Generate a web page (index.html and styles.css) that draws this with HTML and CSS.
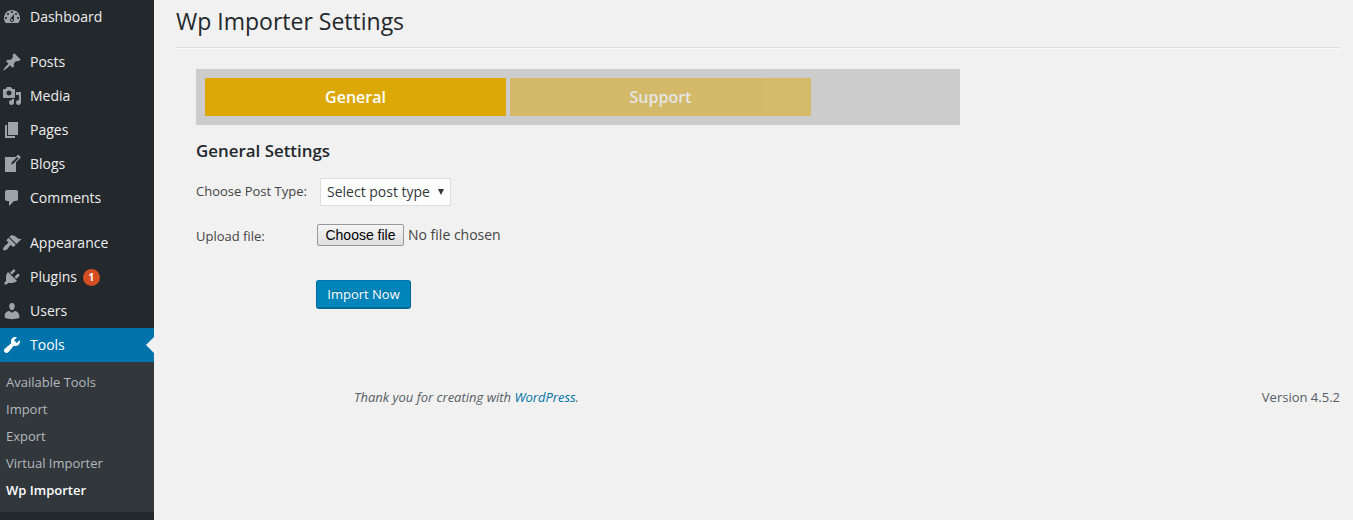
FILE: index.html
```html
<!DOCTYPE html>
<html lang="en">
<head>
<meta charset="utf-8">
<title>Wp Importer Settings</title>
<link rel="stylesheet" href="styles.css">
</head>
<body>
<div class="layout">
  <nav class="sidebar">
    <ul class="menu">
      <li class="item"><svg class="icon" viewBox="0 0 20 20"><path d="M3.76 16h12.48c1.1-1.37 1.76-3.11 1.76-5 0-4.42-3.58-8-8-8s-8 3.58-8 8c0 1.89.66 3.63 1.76 5zM10 4c.55 0 1 .45 1 1s-.45 1-1 1-1-.45-1-1 .45-1 1-1zM6 6c.55 0 1 .45 1 1s-.45 1-1 1-1-.45-1-1 .45-1 1-1zm8 0c.55 0 1 .45 1 1s-.45 1-1 1-1-.45-1-1 .45-1 1-1zm-5.370 5.550L12 7v6c0 1.100-.9 2-2 2s-2-.9-2-2c0-.57.24-1.080.63-1.450zM4 10c.55 0 1 .45 1 1s-.45 1-1 1-1-.45-1-1 .45-1 1-1zm12 0c.55 0 1 .45 1 1s-.45 1-1 1-1-.45-1-1 .45-1 1-1zm-5 3c0-.55-.45-1-1-1s-1 .45-1 1 .45 1 1 1 1-.45 1-1z" fill-rule="evenodd"/></svg><span>Dashboard</span></li>
      <li class="item group-start"><svg class="icon" viewBox="0 0 20 20"><path d="M10.44 3.02l1.82-1.82 6.36 6.35-1.83 1.82c-1.05-.68-2.48-.57-3.41.36l-.75.75c-.92.93-1.04 2.35-.35 3.41l-1.83 1.82-2.41-2.41-2.8 2.79c-.42.42-3.38 2.71-3.8 2.29s1.86-3.39 2.28-3.81l2.79-2.79L4.1 9.36l1.83-1.82c1.05.69 2.48.57 3.4-.36l.75-.75c.93-.92 1.05-2.35.36-3.41z"/></svg><span>Posts</span></li>
      <li class="item"><svg class="icon" viewBox="0 0 20 20"><path fill-rule="evenodd" d="M13 11V4c0-.55-.45-1-1-1h-1.67L9 1H5L3.67 3H2c-.55 0-1 .45-1 1v7c0 .55.45 1 1 1h10c.55 0 1-.45 1-1zM7 4.500c1.380 0 2.500 1.120 2.500 2.500S8.380 9.500 7 9.500 4.500 8.380 4.500 7 5.620 4.500 7 4.500zM14 6h5v10.500c0 1.380-1.120 2.500-2.500 2.500S14 17.880 14 16.500s1.120-2.500 2.500-2.500c.17 0 .34.02.5.05V9h-3V6zm-4 8.050V13h2v3.500c0 1.380-1.120 2.500-2.500 2.500S7 17.880 7 16.500 8.120 14 9.500 14c.17 0 .34.02.5.05z"/></svg><span>Media</span></li>
      <li class="item"><svg class="icon" viewBox="0 0 20 20"><path d="M6 15V2h10v13H6zm-1 1h8v2H3V5h2v11z"/></svg><span>Pages</span></li>
      <li class="item"><svg class="icon" viewBox="0 0 20 20"><path fill-rule="evenodd" d="M16.89 1.200l1.410 1.410c.39.39.39 1.020 0 1.410L14 8.330V18H3V3h10.670l1.800-1.800c.4-.39 1.030-.4 1.420 0zm-5.660 8.480l5.370-5.360-1.420-1.420-5.360 5.370-.71 2.120z"/></svg><span>Blogs</span></li>
      <li class="item"><svg class="icon" viewBox="0 0 20 20"><path d="M5 2h9c1.100 0 2 .9 2 2v7c0 1.100-.9 2-2 2h-2l-5 5v-5H5c-1.100 0-2-.9-2-2V4c0-1.100.9-2 2-2z"/></svg><span>Comments</span></li>
      <li class="item group-start"><svg class="icon" viewBox="0 0 20 20"><path d="M14.48 11.06L7.41 3.99l1.5-1.5c.5-.56 2.3-.47 3.51.32 1.21.8 1.43 1.28 2.91 2.1 1.18.64 2.45 1.26 4.45.85zm-.71.71L6.7 4.7 4.93 6.47c-.39.39-.39 1.02 0 1.41l1.06 1.06c.39.39.39 1.03 0 1.42-.6.6-1.43 1.11-2.21 1.69-.35.26-.7.53-1.01.84C1.43 14.23.4 16.08 1.4 17.07c.99 1 2.84-.03 4.18-1.36.31-.31.58-.66.85-1.02.57-.78 1.08-1.61 1.69-2.21.39-.39 1.02-.39 1.41 0l1.06 1.06c.39.39 1.02.39 1.41 0z"/></svg><span>Appearance</span></li>
      <li class="item"><svg class="icon" viewBox="0 0 20 20"><path d="M13.11 4.36L9.87 7.6 8 5.73l3.24-3.24c.35-.34 1.05-.2 1.56.32.52.51.66 1.21.31 1.55zm-8 1.77l.91-1.12 9.01 9.01-1.19.84c-.71.71-2.63 1.16-3.82 1.16H6.14L4.9 17.26c-.59.59-1.54.59-2.12 0-.59-.58-.59-1.53 0-2.12l1.24-1.24v-3.88c0-1.13.4-3.19 1.09-3.89zm7.26 3.97l3.24-3.24c.34-.35 1.04-.21 1.55.31.52.51.66 1.21.31 1.55l-3.24 3.25z"/></svg><span>Plugins</span><span class="count">1</span></li>
      <li class="item"><svg class="icon" viewBox="0 0 20 20"><path d="M10 9.25c-2.27 0-2.73-3.44-2.73-3.44C7 4.02 7.82 2 9.97 2c2.16 0 2.98 2.02 2.71 3.81 0 0-.41 3.44-2.68 3.44zm0 2.57L12.72 10c2.39 0 4.52 2.33 4.52 4.53v2.49s-3.65 1.13-7.24 1.13c-3.65 0-7.24-1.13-7.24-1.13v-2.49c0-2.25 1.94-4.48 4.47-4.48z"/></svg><span>Users</span></li>
      <li class="item current"><svg class="icon" viewBox="0 0 20 20"><path d="M16.68 9.77c-1.34 1.34-3.3 1.67-4.95.99l-5.41 6.52c-.99.99-2.59.99-3.58 0s-.99-2.59 0-3.57l6.52-5.42c-.68-1.65-.35-3.61.99-4.95 1.28-1.28 3.12-1.62 4.72-1.06l-2.89 2.89 2.82 2.82 2.86-2.87c.53 1.58.18 3.39-1.08 4.65z"/></svg><span>Tools</span></li>
    </ul>
    <ul class="submenu">
      <li>Available Tools</li>
      <li>Import</li>
      <li>Export</li>
      <li>Virtual Importer</li>
      <li class="active">Wp Importer</li>
    </ul>
  </nav>
  <main class="content">
    <h1 class="title">Wp Importer Settings</h1>
    <section class="panel">
      <div class="tabs">
        <div class="tab">General</div>
        <div class="tab inactive">Support</div>
      </div>
      <h2 class="heading">General Settings</h2>
      <div class="row type-row">
        <span class="label">Choose Post Type:</span>
        <div class="select"><span>Select post type</span><svg class="arrow" viewBox="0 0 6 6"><path d="M0 0h6L3 6z"/></svg></div>
      </div>
      <div class="row file-row">
        <span class="label">Upload file:</span>
        <button class="choose">Choose file</button>
        <span class="file-name">No file chosen</span>
      </div>
      <button class="submit">Import Now</button>
    </section>
    <footer class="footer">
      <em>Thank you for creating with <a class="link">WordPress</a>.</em>
      <span>Version 4.5.2</span>
    </footer>
  </main>
</div>
</body>
</html>
```
FILE: styles.css
```css
* { box-sizing: border-box; }
body {
  margin: 0;
  background: #f1f1f1;
  color: #444;
  font: 13px/18px "Open Sans", sans-serif;
}
.layout { display: flex; height: 520px; overflow: hidden; }
ul { list-style: none; margin: 0; padding: 0; }

.sidebar { width: 154px; flex: none; background: #23282d; }
.item {
  display: flex;
  align-items: center;
  height: 34px;
  padding-left: 2px;
  color: #eee;
  font-size: 14px;
}
.group-start { margin-top: 11px; }
.icon { width: 20px; height: 20px; margin-right: 8px; fill: #9ea3a8; }
.count {
  width: 17px;
  height: 17px;
  margin-left: 6px;
  border-radius: 50%;
  background: #d54e21;
  color: #fff;
  font-size: 10px;
  font-weight: 700;
  line-height: 17px;
  text-align: center;
}
.current { position: relative; background: #0073aa; color: #fff; }
.current .icon { fill: #fff; }
.current::after {
  content: "";
  position: absolute;
  right: 0;
  top: 9px;
  border: 8px solid transparent;
  border-left-width: 0;
  border-right-color: #f1f1f1;
}
.submenu { height: 150px; padding: 7px 6px; background: #32373c; color: #b4b9be; }
.submenu li { height: 27px; line-height: 27px; }
.submenu .active { color: #fff; font-weight: 600; }

.content { flex: 1; padding: 0 13px 0 22px; }
.title {
  height: 48px;
  margin: 0;
  padding-top: 7px;
  border-bottom: 1px solid #dedede;
  box-shadow: 0 1px 0 #fafafa;
  color: #23282d;
  font-size: 23px;
  font-weight: 400;
  line-height: 29px;
}
.panel { padding: 21px 0 0 20px; }
.tabs { display: flex; gap: 4px; width: 764px; height: 56px; padding: 9px; background: #ccc; }
.tab {
  width: 301px;
  height: 38px;
  background: #dba808;
  color: #fff;
  font-size: 16px;
  font-weight: 600;
  line-height: 38px;
  text-align: center;
}
.inactive { opacity: .5; }
.heading { margin: 15px 0 0; color: #23282d; font-size: 16.9px; font-weight: 600; line-height: 22px; }
.row { display: flex; align-items: center; }
.type-row { height: 28px; margin-top: 16px; }
.label { width: 121px; padding-bottom: 2px; }
.select {
  display: flex;
  align-items: center;
  justify-content: space-between;
  width: 131px;
  height: 28px;
  margin-left: 3px;
  padding: 0 6px;
  border: 1px solid #ddd;
  background: #fff;
  color: #32373c;
  font-size: 14px;
}
.arrow { width: 6px; height: 6px; fill: #32373c; }
.file-row { height: 22px; margin-top: 18px; font-size: 14px; }
.file-row .label { padding: 2px 0 0; font-size: 13px; }
.choose {
  width: 87px;
  height: 22px;
  margin: 0 4px 0 0;
  padding: 0;
  border: 1px solid #999;
  border-radius: 2px;
  background: linear-gradient(#f6f6f6, #dedede);
  color: #000;
  font: 14px/18px "Liberation Sans", Arial, sans-serif;
}
.submit {
  display: block;
  width: 95px;
  height: 29px;
  margin: 34px 0 0 120px;
  padding: 0;
  border: 1px solid #006799;
  border-top-color: #0073aa;
  border-bottom-width: 2px;
  border-radius: 3px;
  background: #0085ba;
  color: #fff;
  font: 13px/26px "Open Sans", sans-serif;
  text-shadow: 0 -1px 1px #006799;
}
.footer {
  display: flex;
  justify-content: space-between;
  padding: 79px 0 0 178px;
  color: #555d66;
}
.link { color: #0073aa; }
```
